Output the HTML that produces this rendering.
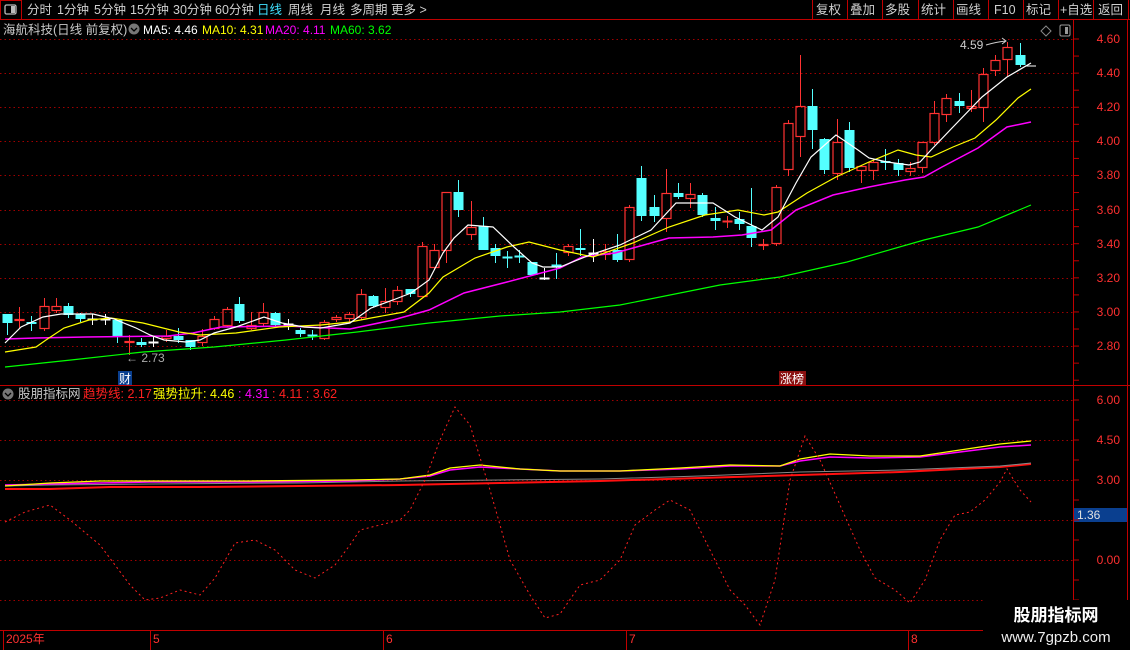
<!DOCTYPE html>
<html><head><meta charset="utf-8"><style>
html,body{margin:0;padding:0;background:#000;width:1130px;height:650px;overflow:hidden;font-family:"Liberation Sans","Noto Sans CJK SC",sans-serif}
svg{display:block}
</style></head><body>
<svg id="s" width="1130" height="650" xmlns="http://www.w3.org/2000/svg" font-family="Liberation Sans, Noto Sans CJK SC, sans-serif">
<rect width="1130" height="650" fill="#000"/>
<line x1="0" y1="19.5" x2="1130" y2="19.5" stroke="#c00000"/>
<rect x="0.5" y="0.5" width="21" height="19" fill="none" stroke="#c00000"/>
<rect x="5" y="5" width="11" height="9" rx="1.5" fill="none" stroke="#bbb" stroke-width="1.3"/><rect x="11" y="6" width="4" height="7" fill="#bbb"/>
<g font-size="12.5" fill="#d0d0d0">
<text x="27" y="14">分时</text><text x="57" y="14">1分钟</text><text x="94" y="14">5分钟</text><text x="130" y="14">15分钟</text><text x="173" y="14">30分钟</text><text x="215" y="14">60分钟</text>
<text x="257" y="14" fill="#40e0ff">日线</text><text x="288" y="14">周线</text><text x="320" y="14">月线</text><text x="350" y="14">多周期</text><text x="391" y="14">更多 &gt;</text>
<text x="816" y="14">复权</text><text x="850" y="14">叠加</text><text x="885" y="14">多股</text><text x="921" y="14">统计</text><text x="956" y="14">画线</text><text x="994" y="14">F10</text><text x="1026" y="14">标记</text><text x="1060" y="14">+自选</text><text x="1098" y="14">返回</text>
</g>
<g stroke="#c00000"><line x1="812.5" y1="0" x2="812.5" y2="19"/><line x1="847.5" y1="0" x2="847.5" y2="19"/><line x1="882.5" y1="0" x2="882.5" y2="19"/><line x1="918.5" y1="0" x2="918.5" y2="19"/><line x1="953.5" y1="0" x2="953.5" y2="19"/><line x1="988.5" y1="0" x2="988.5" y2="19"/><line x1="1023.5" y1="0" x2="1023.5" y2="19"/><line x1="1058.5" y1="0" x2="1058.5" y2="19"/><line x1="1093.5" y1="0" x2="1093.5" y2="19"/><line x1="1128.5" y1="0" x2="1128.5" y2="19"/></g>
<text x="3" y="34" font-size="12.5" fill="#c8c8c8">海航科技(日线 前复权)</text>
<circle cx="134" cy="29" r="5.5" fill="#777"/><path d="M131 28l3 3 3-3" stroke="#000" stroke-width="1.3" fill="none"/>
<g font-size="12"><text x="143" y="34" fill="#fff">MA5: 4.46</text><text x="202" y="34" fill="#ffff00">MA10: 4.31</text><text x="265" y="34" fill="#ff00ff">MA20: 4.11</text><text x="330" y="34" fill="#00ff00">MA60: 3.62</text></g>
<path d="M1046 26l5 5-5 5-5-5z" fill="none" stroke="#888"/><rect x="1060" y="25" width="10" height="11" rx="1.5" fill="none" stroke="#999"/><rect x="1065" y="27" width="3" height="7" fill="#999"/>
<line x1="1073.5" y1="20" x2="1073.5" y2="630" stroke="#c00000"/>
<line x1="1127.5" y1="20" x2="1127.5" y2="630" stroke="#c00000"/>
<line x1="0" y1="385.5" x2="1130" y2="385.5" stroke="#c00000"/>
<line x1="0" y1="630.5" x2="1130" y2="630.5" stroke="#c00000"/>
<g id="grid" stroke="#a00000" stroke-dasharray="1.5,3"></g>
<g font-size="12" fill="#ff3030" text-anchor="end">
<text x="1120" y="43">4.60</text><text x="1120" y="77">4.40</text><text x="1120" y="111">4.20</text><text x="1120" y="145">4.00</text><text x="1120" y="179">3.80</text><text x="1120" y="214">3.60</text><text x="1120" y="248">3.40</text><text x="1120" y="282">3.20</text><text x="1120" y="316">3.00</text><text x="1120" y="350">2.80</text>
<text x="1120" y="404">6.00</text><text x="1120" y="444">4.50</text><text x="1120" y="484">3.00</text><text x="1120" y="564">0.00</text>
</g>
<rect x="1074" y="508" width="53" height="14" fill="#0a3f8f"/><text x="1077" y="519" font-size="12" fill="#e0e0e0">1.36</text>
<g id="ticks" stroke="#c00000"></g>
<g id="plot"></g>
<text x="126" y="362" font-size="12" fill="#aaa">← 2.73</text>
<text x="960" y="49" font-size="12" fill="#ccc">4.59</text><path d="M986 45q10-3 20-4M1002 38l4 3-4 3" stroke="#ccc" fill="none"/>
<rect x="118" y="371" width="14" height="14" fill="#0a3f8f"/><text x="119" y="383" font-size="12" fill="#fff">财</text>
<rect x="779" y="371" width="27" height="14" fill="#8a1010"/><text x="780" y="383" font-size="12" fill="#fff">涨榜</text>
<circle cx="8" cy="394" r="5.5" fill="#777"/><path d="M5 393l3 3 3-3" stroke="#000" stroke-width="1.3" fill="none"/>
<g font-size="12.5"><text x="18" y="398" fill="#c8c8c8">股朋指标网</text><text x="83" y="398" fill="#ff2020">趋势线: 2.17</text><text x="153" y="398" fill="#ffff00">强势拉升: 4.46</text><text x="238" y="398" fill="#ff00ff">: 4.31</text><text x="272" y="398" fill="#ff2020">: 4.11  : 3.62</text></g>
<g stroke="#c00000"><line x1="3.5" y1="631" x2="3.5" y2="650"/><line x1="150.5" y1="631" x2="150.5" y2="650"/><line x1="383.5" y1="631" x2="383.5" y2="650"/><line x1="626.5" y1="631" x2="626.5" y2="650"/><line x1="908.5" y1="631" x2="908.5" y2="650"/></g>
<g font-size="12" fill="#ff3030"><text x="6" y="643">2025年</text><text x="153" y="643">5</text><text x="386" y="643">6</text><text x="629" y="643">7</text><text x="911" y="643">8</text></g>
<rect x="983" y="600" width="147" height="50" fill="#000"/>
<text x="1056" y="621" font-size="17" font-weight="bold" fill="#fff" text-anchor="middle">股朋指标网</text>
<text x="1056" y="642" font-size="15" fill="#eee" text-anchor="middle">www.7gpzb.com</text>
</svg>
<script>
var NS="http://www.w3.org/2000/svg",P=document.getElementById("plot");
function el(t,a,p){var e=document.createElementNS(NS,t);for(var k in a)e.setAttribute(k,a[k]);(p||P).appendChild(e);return e;}
var G=document.getElementById("grid");
[39,73,107,141,175,210,244,278,312,346].forEach(function(y){el("line",{x1:0,y1:y+.5,x2:1073,y2:y+.5},G);});
[400,440,480,520,560,600].forEach(function(y){el("line",{x1:0,y1:y+.5,x2:1073,y2:y+.5},G);});
var T=document.getElementById("ticks");
for(var y=39;y<386;y+=17.06){el("line",{x1:1074,y1:y,x2:1079,y2:y},T);}
for(var y=400;y<630;y+=20){el("line",{x1:1074,y1:y,x2:1079,y2:y},T);}
var C=[[314,323,314,335,'c'],[319,321,307,328,'r'],[322,324,316,331,'c'],[306,329,298,331,'r'],[306,311,298,313,'r'],[306,315,303,318,'c'],[314,319,313,322,'c'],[319,319,314,325,'w'],[319,319,314,325,'w'],[320,337,320,343,'c'],
[341,343,335,355,'r'],[342,345,338,347,'c'],[342,342,337,347,'w'],[336,339,330,342,'r'],[336,340,328,343,'c'],[340,347,340,350,'c'],[336,343,329,346,'r'],[319,329,316,330,'r'],[309,326,307,327,'r'],[304,321,297,323,'c'],
[325,329,312,330,'r'],[312,324,303,327,'r'],[313,325,312,328,'c'],[324,324,319,330,'w'],[330,334,328,337,'c'],[335,335,330,340,'c'],[322,339,320,340,'r'],[317,320,315,322,'r'],[314,319,312,322,'r'],[294,318,289,320,'r'],
[296,306,295,307,'c'],[301,308,288,313,'r'],[290,302,286,305,'r'],[289,294,289,297,'c'],[246,297,242,297,'r'],[250,268,244,270,'r'],[192,251,192,263,'r'],[192,210,180,217,'c'],[227,235,201,240,'r'],[226,250,217,250,'c'],
[248,256,244,263,'c'],[257,257,251,268,'c'],[256,256,250,263,'c'],[262,275,262,276,'c'],[278,278,268,280,'w'],[265,265,253,279,'c'],[246,253,244,256,'r'],[248,250,229,256,'c'],[253,253,239,262,'w'],[251,255,244,260,'r'],
[250,260,234,262,'c'],[207,260,205,262,'r'],[178,216,166,221,'c'],[207,216,195,222,'c'],[193,219,169,232,'r'],[193,197,183,199,'c'],[194,199,183,208,'r'],[195,215,193,217,'c'],[218,221,207,230,'c'],[221,222,216,228,'r'],
[219,224,212,230,'c'],[226,238,188,247,'c'],[244,246,239,250,'r'],[187,244,185,246,'r'],[123,170,120,176,'r'],[106,137,55,157,'r'],[106,130,89,149,'c'],[139,170,138,174,'c'],[142,174,119,180,'r'],[130,168,122,172,'c'],
[166,171,165,183,'r'],[162,171,159,180,'r'],[161,163,149,170,'c'],[163,170,159,176,'c'],[168,172,162,176,'r'],[142,168,142,173,'r'],[113,143,101,145,'r'],[98,115,94,122,'r'],[101,106,93,113,'c'],[106,109,90,112,'r'],
[74,108,68,122,'r'],[60,71,55,76,'r'],[47,60,42,76,'r'],[55,65,43,67,'c']];
C.forEach(function(c,i){var x=Math.round(7+i*12.2)+.5,t=c[4],top=Math.min(c[0],c[1]),bot=Math.max(c[0],c[1]);
var col=t=='r'?'#ff3232':t=='c'?'#54ffff':'#ffffff';
el("line",{x1:x,y1:c[2],x2:x,y2:top,stroke:col});el("line",{x1:x,y1:bot,x2:x,y2:c[3],stroke:col});
if(bot-top<2){el("line",{x1:x-5,y1:top+.5,x2:x+5,y2:top+.5,stroke:col,"stroke-width":2});}
else if(t=='r'){el("rect",{x:x-4.5,y:top+.5,width:9,height:bot-top-1,fill:"none",stroke:col,"stroke-width":1.2});}
else{el("rect",{x:x-5,y:top,width:10,height:bot-top,fill:col});}});
function pl(pts,col,w,da){var a={points:pts,fill:"none",stroke:col,"stroke-width":w||1.2};if(da)a["stroke-dasharray"]=da;el("polyline",a);}
pl("5,367 71,360 143,352 214,347 286,340 357,332 429,323 500,316 560,312 620,305 680,293 720,285 780,277 847,262 924,240 978,227 1031,205","#00ff00");
pl("5,339 36,338 86,337 168,336 193,333 221,327 286,326 350,329 393,320 429,310 464,293 507,282 560,268 582,257 615,253 669,238 713,237 742,235 771,230 796,210 833,195 869,187 905,180 924,177 942,167 978,148 1007,127 1031,122","#ff00ff",1.5);
pl("5,352 36,347 46,340 64,328 89,320 111,318 143,323 179,332 200,335 236,333 279,327 321,325 350,322 371,318 404,312 429,293 443,277 475,258 507,247 529,242 560,250 593,257 633,243 669,227 705,215 738,210 764,215 778,212 807,193 836,177 869,162 898,150 916,155 931,157 953,147 975,138 996,120 1018,98 1031,89","#ffff00");
pl("5,343 21,327 43,317 61,314 93,314 114,319 136,328 150,335 164,340 186,342 200,340 214,333 236,327 264,317 282,323 304,327 321,328 350,323 371,308 393,300 411,293 429,280 443,253 454,238 468,225 493,227 514,247 532,263 543,267 560,267 590,255 620,245 651,230 676,203 713,203 735,217 762,230 778,217 796,183 811,157 836,135 858,150 869,158 887,162 909,165 920,162 931,150 953,127 982,97 1007,77 1031,63","#ffffff");
el("line",{x1:1025,y1:66,x2:1036,y2:66,stroke:"#fff"});
pl("5,489 50,489 110,487 200,487 300,486 400,485 500,483 600,481 700,478 800,475 900,472 1000,467 1031,464","#ff1010",2);
pl("5,486 50,485 150,484 300,483 400,481 500,480 600,479 700,476 800,472 900,470 1000,466 1031,463","#888",1);
pl("5,485 50,484 100,483 150,482 250,482 350,481 400,479 430,476 450,470 480,467 520,469 560,471 620,471 680,469 730,466 780,466 800,461 830,457 870,458 920,457 960,452 1000,447 1031,445","#ff00ff",1.5);
pl("5,486 50,483 100,481 150,481 250,481 350,480 400,479 430,475 450,468 480,465 520,469 560,471 620,471 680,468 730,465 780,466 800,459 830,454 870,456 920,456 960,450 1000,444 1031,441","#ffff00",1.3);
pl("5,522 25,512 50,505 70,520 100,545 130,585 145,600 160,598 180,590 200,595 215,578 235,543 255,540 275,550 295,570 315,578 335,565 350,545 360,530 380,525 400,520 410,510 425,480 440,440 455,407 470,425 490,490 510,560 530,595 545,618 560,614 580,585 600,580 620,560 635,525 655,510 670,500 690,510 710,550 730,590 745,605 760,625 775,580 790,480 805,436 820,460 840,505 860,550 875,578 895,590 910,603 925,580 940,540 955,515 970,512 985,500 1000,482 1007,469 1020,490 1031,502","#ff2020",1,"2,3");
</script>
</body></html>
